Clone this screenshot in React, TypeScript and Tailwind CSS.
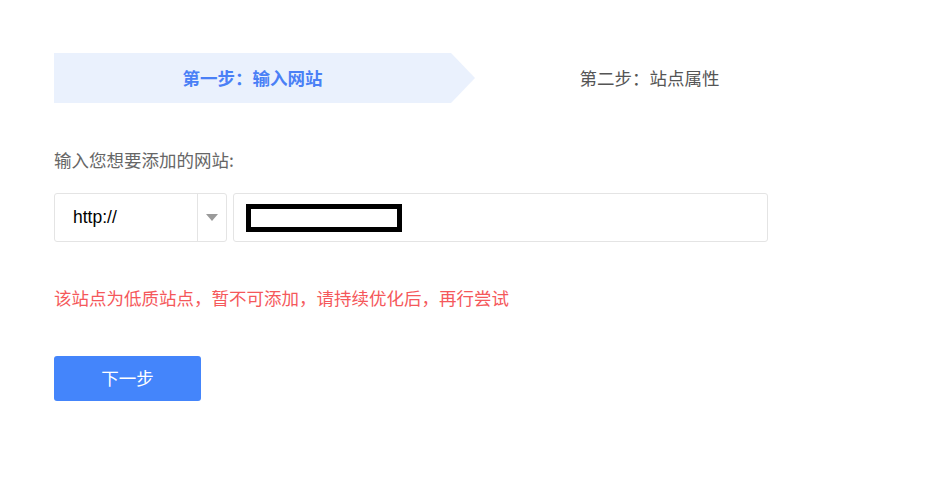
import React from "react";

export default function App() {
  const cjk = {
    fontFamily:
      '"Microsoft YaHei", "Noto Sans CJK SC", "Liberation Sans", sans-serif',
  } as React.CSSProperties;
  return (
    <div className="min-h-[501px] w-full bg-white pl-[54px] pt-[53px]" style={cjk}>
      <div className="flex h-[50px] w-[794px]">
        <div className="relative flex w-[397px] items-center justify-center bg-[#eaf1fd]">
          <span className="text-[17.5px] font-bold text-[#4a80f6]">第一步：输入网站</span>
          <div className="absolute right-[-24px] top-0 h-0 w-0 border-y-[25px] border-l-[24px] border-y-transparent border-l-[#eaf1fd]" />
        </div>
        <div className="flex flex-1 items-center justify-center">
          <span className="text-[17.5px] text-[#555555]">第二步：站点属性</span>
        </div>
      </div>

      <div className="mt-[45px] h-[24px] text-[17.5px] leading-[24px] text-[#666666]">
        输入您想要添加的网站:
      </div>

      <div className="mt-[21px] flex h-[49px]">
        <div className="flex w-[173px] rounded-[3px] border border-[#e4e4e4]">
          <div
            className="flex w-[142px] items-center pl-[18px] text-[17.5px] text-black"
            style={{ fontFamily: '"Liberation Sans", Arial, sans-serif' }}
          >
            http://
          </div>
          <div className="flex flex-1 items-center justify-center border-l border-[#e4e4e4]">
            <div className="h-0 w-0 border-x-[6px] border-t-[7px] border-x-transparent border-t-[#9a9a9a]" />
          </div>
        </div>
        <div className="ml-[6px] flex w-[535px] items-center rounded-[3px] border border-[#e4e4e4] pl-[12px]">
          <div className="h-[28px] w-[156px] border-[5px] border-black bg-white" />
        </div>
      </div>

      <div className="mt-[44px] h-[24px] text-[17.5px] leading-[24px] text-[#f5585b]">
        该站点为低质站点，暂不可添加，请持续优化后，再行尝试
      </div>

      <button className="mt-[46px] flex h-[45px] w-[147px] items-center justify-center rounded-[3px] bg-[#4485fb] text-[17.5px] text-white">
        下一步
      </button>
    </div>
  );
}
